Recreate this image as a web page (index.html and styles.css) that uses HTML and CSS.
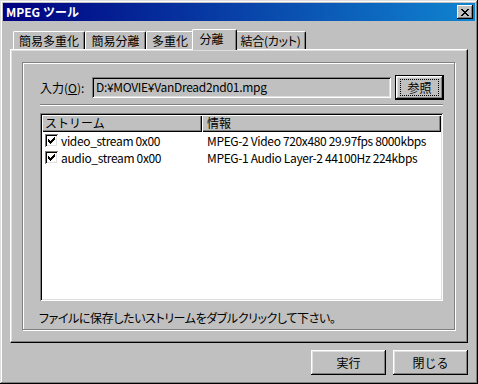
FILE: index.html
```html
<!DOCTYPE html>
<html lang="ja">
<head>
    <meta charset="UTF-8">
    <title>MPEG ツール</title>
    <link rel="stylesheet" href="styles.css">
</head>
<body>
    <div class="window">
        <div class="titlebar">
            <span class="title">MPEG ツール</span>
            <div class="close">
                <svg width="8" height="7" viewBox="0 0 8 7">
                    <path d="M0 0h2v1h1v1h2V1h1V0h2v1H7v1H6v1H5v1h1v1h1v1h1v1H6V6H5V5H3v1H2v1H0V6h1V5h1V4h1V3H2V2H1V1H0z" fill="#000"/>
                </svg>
            </div>
        </div>

        <div class="client">
            <!-- tab strip -->
            <div class="tabs">
                <div class="tab t1">簡易多重化</div>
                <div class="tab t2">簡易分離</div>
                <div class="tab t3">多重化</div>
                <div class="tab t4 active">分離</div>
                <div class="tab t5">結合(カット)</div>
            </div>

            <div class="panel">
                <div class="group">
                    <div class="input-row">
                        <span class="label">入力(<u>O</u>):</span>
                        <div class="field">D:¥MOVIE¥VanDread2nd01.mpg</div>
                        <div class="btn default"><span class="focus">参照</span></div>
                    </div>
                    <div class="separator"></div>

                    <div class="listview">
                        <div class="lv-header">
                            <div class="col c1">ストリーム</div>
                            <div class="col c2">情報</div>
                        </div>
                        <div class="lv-row">
                            <div class="cell c1">
                                <span class="check"><svg width="7" height="7" viewBox="0 0 7 7"><path d="M6 0h1v3H6v1H5v1H4v1H3v1H2V6H1V5H0V2h1v1h1v1h1V3h1V2h1V1h1z" fill="#000"/></svg></span>
                                video_stream 0x00
                            </div>
                            <div class="cell c2">MPEG-2 Video 720x480 29.97fps 8000kbps</div>
                        </div>
                        <div class="lv-row">
                            <div class="cell c1">
                                <span class="check"><svg width="7" height="7" viewBox="0 0 7 7"><path d="M6 0h1v3H6v1H5v1H4v1H3v1H2V6H1V5H0V2h1v1h1v1h1V3h1V2h1V1h1z" fill="#000"/></svg></span>
                                audio_stream 0x00
                            </div>
                            <div class="cell c2">MPEG-1 Audio Layer-2 44100Hz 224kbps</div>
                        </div>
                    </div>

                    <div class="hint">ファイルに保存したいストリームをダブルクリックして下さい。</div>
                </div>
            </div>

            <div class="buttons">
                <div class="btn wide">実行</div>
                <div class="btn wide">閉じる</div>
            </div>
        </div>
    </div>
</body>
</html>
```

FILE: styles.css
```css
* {
    box-sizing: border-box;
}
body {
    margin: 0;
    font-family: "Noto Sans CJK JP", sans-serif;
    font-size: 12px;
    color: #000;
    background: #c0c0c0;
}
.window {
    width: 478px;
    height: 384px;
    padding: 3px;
    background: #c0c0c0;
    box-shadow: inset -1px -1px #000, inset 1px 1px #dfdfdf, inset -2px -2px #808080, inset 2px 2px #fff;
}
.titlebar {
    height: 18px;
    display: flex;
    align-items: center;
    justify-content: space-between;
    padding: 0 2px 0 3px;
    background: linear-gradient(90deg, #000080, #1084d0);
}
.title {
    color: #fff;
    font-weight: bold;
    line-height: 18px;
}
.close {
    width: 16px;
    height: 14px;
    display: flex;
    align-items: center;
    justify-content: center;
    background: #c0c0c0;
    box-shadow: inset -1px -1px #000, inset 1px 1px #fff, inset -2px -2px #808080;
}
.client {
    padding: 8px 7px 7px 7px;
}

/* tabs */
.tabs {
    display: flex;
    align-items: flex-end;
    padding-left: 3px;
}
.tab {
    height: 18px;
    line-height: 17px;
    text-align: center;
    background: #c0c0c0;
    border-top: 1px solid #fff;
    border-left: 1px solid #fff;
    border-right: 1px solid #000;
    border-radius: 2px 2px 0 0;
    box-shadow: inset -1px 0 #808080;
    white-space: nowrap;
}
.t1 { width: 72px; }
.t2 { width: 61px; }
.t3 { width: 48px; }
.t4 { width: 45px; }
.t5 {
    width: 71px;
    font-feature-settings: "palt";
    letter-spacing: -0.3px;
}
.tab.active {
    position: relative;
    z-index: 1;
    height: 21px;
    margin: 0 -2px -1px -2px;
    line-height: 18px;
    text-indent: -6px;
}
.panel {
    height: 294px;
    padding: 12px 12px 0 11px;
    background: #c0c0c0;
    border: 1px solid;
    border-color: #fff #000 #000 #fff;
    box-shadow: inset -1px -1px #808080, inset 1px 1px #dfdfdf;
}

/* group frame */
.group {
    height: 268px;
    padding: 12px 10px 0 17px;
    border: 1px solid #808080;
    box-shadow: 1px 1px 0 #fff, inset 1px 1px 0 #fff;
}
.input-row {
    display: flex;
    align-items: center;
    height: 25px;
}
.label {
    width: 52px;
    white-space: nowrap;
}
.field {
    width: 299px;
    height: 21px;
    margin-right: 4px;
    padding-left: 4px;
    line-height: 20px;
    letter-spacing: -0.3px;
    background: #c0c0c0;
    box-shadow: inset 1px 1px #808080, inset -1px -1px #fff, inset 2px 2px #000, inset -2px -2px #dfdfdf;
}
.btn {
    display: flex;
    align-items: center;
    justify-content: center;
    height: 25px;
    background: #c0c0c0;
    box-shadow: inset -1px -1px #000, inset 1px 1px #fff, inset -2px -2px #808080, inset 2px 2px #dfdfdf;
}
.btn.default {
    width: 49px;
    border: 1px solid #000;
}
.focus {
    width: 39px;
    height: 17px;
    line-height: 15px;
    text-align: center;
    border: 1px dotted #000;
}
.separator {
    height: 2px;
    margin: 4px 1px 0 0;
    border-top: 1px solid #808080;
    border-bottom: 1px solid #fff;
}

/* list view */
.listview {
    height: 188px;
    margin: 7px 1px 0 0;
    padding: 2px;
    background: #fff;
    box-shadow: inset 1px 1px #808080, inset -1px -1px #fff, inset 2px 2px #000, inset -2px -2px #dfdfdf;
}
.lv-header {
    display: flex;
    height: 17px;
}
.col {
    height: 17px;
    line-height: 16px;
    background: #c0c0c0;
    box-shadow: inset 1px 1px #fff, inset -1px -1px #000, inset -2px -2px #808080;
}
.col.c1 {
    width: 160px;
    padding-left: 3px;
}
.col.c2 {
    flex: 1;
    padding-left: 5px;
}
.lv-row {
    display: flex;
    height: 17px;
    line-height: 17px;
    letter-spacing: -0.35px;
}
.lv-row:first-of-type {
    margin-top: 1px;
}
.cell.c1 {
    width: 160px;
    padding-left: 3px;
    display: flex;
    align-items: center;
    gap: 3px;
    white-space: nowrap;
}
.cell.c2 {
    padding-left: 5px;
    white-space: nowrap;
}
.check {
    width: 13px;
    height: 13px;
    display: flex;
    align-items: center;
    justify-content: center;
    background: #fff;
    box-shadow: inset 1px 1px #808080, inset -1px -1px #fff, inset 2px 2px #000, inset -2px -2px #dfdfdf;
}
.hint {
    margin-top: 8px;
    margin-left: -1px;
    font-feature-settings: "palt";
    letter-spacing: -0.4px;
    white-space: nowrap;
}

/* bottom buttons */
.buttons {
    display: flex;
    justify-content: flex-end;
    gap: 7px;
    margin-top: 7px;
}
.btn.wide {
    width: 75px;
}
```
